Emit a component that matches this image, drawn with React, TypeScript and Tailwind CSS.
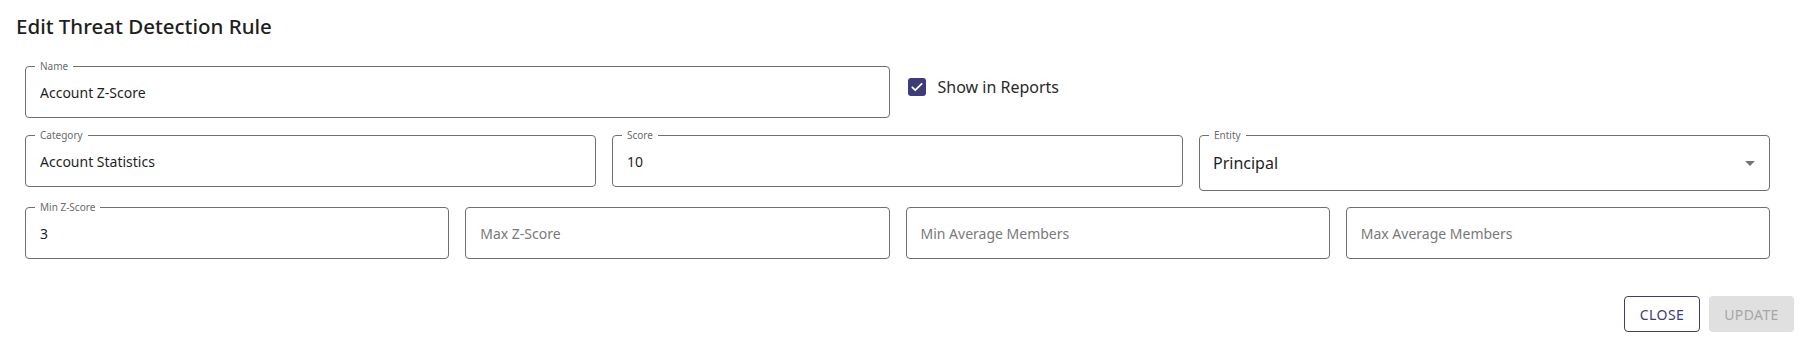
import React from "react";

const ACCENT = "#3d3b78";

function Field({
  label,
  value,
  placeholder,
  className = "",
}: {
  label?: string;
  value?: string;
  placeholder?: string;
  className?: string;
}) {
  return (
    <div
      className={`relative h-[52px] rounded-[4px] border border-[#6f6f6f] flex items-center px-[14px] ${className}`}
    >
      {label && (
        <span className="absolute left-[9px] top-[-8px] bg-white px-[5px] text-[10px] leading-[14px] text-[#6b6b6b]">
          {label}
        </span>
      )}
      {value ? (
        <span className="text-[14px] text-[#1f1f1f]">{value}</span>
      ) : (
        <span className="text-[14px] text-[#7a7a7a]">{placeholder}</span>
      )}
    </div>
  );
}

export default function App() {
  return (
    <div
      className="w-full h-[351px] bg-white overflow-hidden"
      style={{ fontFamily: '"Noto Sans", "Open Sans", sans-serif' }}
    >
      <div className="pl-[16px] pt-[10px] text-[20.5px] leading-[32px] font-medium text-[#1e1e1e]">
        Edit Threat Detection Rule
      </div>

      <div className="pl-[25px] pr-[39px] mt-[24px]">
        <div className="grid grid-cols-12 gap-x-4 mb-[17px] items-start">
          <Field label="Name" value="Account Z-Score" className="col-span-6" />
          <div className="col-span-6 flex items-center h-[42px] pl-[2px]">
            <div
              className="w-[18px] h-[18px] rounded-[3px] flex items-center justify-center"
              style={{ backgroundColor: ACCENT }}
            >
              <svg width="14" height="14" viewBox="0 0 24 24">
                <path
                  d="M4 12.5l5 5L20 6.5"
                  fill="none"
                  stroke="#fff"
                  strokeWidth="3"
                  strokeLinecap="round"
                  strokeLinejoin="round"
                />
              </svg>
            </div>
            <span className="ml-[12px] text-[16px] text-[#2a2a2a]">
              Show in Reports
            </span>
          </div>
        </div>

        <div className="grid grid-cols-12 gap-x-4 mb-[16px] items-start">
          <Field label="Category" value="Account Statistics" className="col-span-4" />
          <Field label="Score" value="10" className="col-span-4" />
          <div className="col-span-4 relative h-[56px] rounded-[4px] border border-[#6f6f6f] flex items-center pl-[13px] pr-[7px]">
            <span className="absolute left-[9px] top-[-8px] bg-white px-[5px] text-[10px] leading-[14px] text-[#6b6b6b]">
              Entity
            </span>
            <span className="flex-1 text-[16px] text-[#1f1f1f]">Principal</span>
            <svg width="24" height="24" viewBox="0 0 24 24">
              <path d="M7 10l5 5 5-5z" fill="#757575" />
            </svg>
          </div>
        </div>

        <div className="grid grid-cols-12 gap-x-4 items-start">
          <Field label="Min Z-Score" value="3" className="col-span-3" />
          <Field placeholder="Max Z-Score" className="col-span-3" />
          <Field placeholder="Min Average Members" className="col-span-3" />
          <Field placeholder="Max Average Members" className="col-span-3" />
        </div>
      </div>

      <div className="flex justify-end gap-[9px] pr-[15px] mt-[37px]">
        <button
          className="w-[76px] h-[36px] rounded-[4px] border text-[14px] tracking-[0.4px] bg-white"
          style={{ borderColor: ACCENT, color: ACCENT }}
        >
          CLOSE
        </button>
        <button className="w-[85px] h-[36px] rounded-[4px] bg-[#e0e0e0] text-[14px] tracking-[0.4px] text-[#a6a6a6]">
          UPDATE
        </button>
      </div>
    </div>
  );
}
